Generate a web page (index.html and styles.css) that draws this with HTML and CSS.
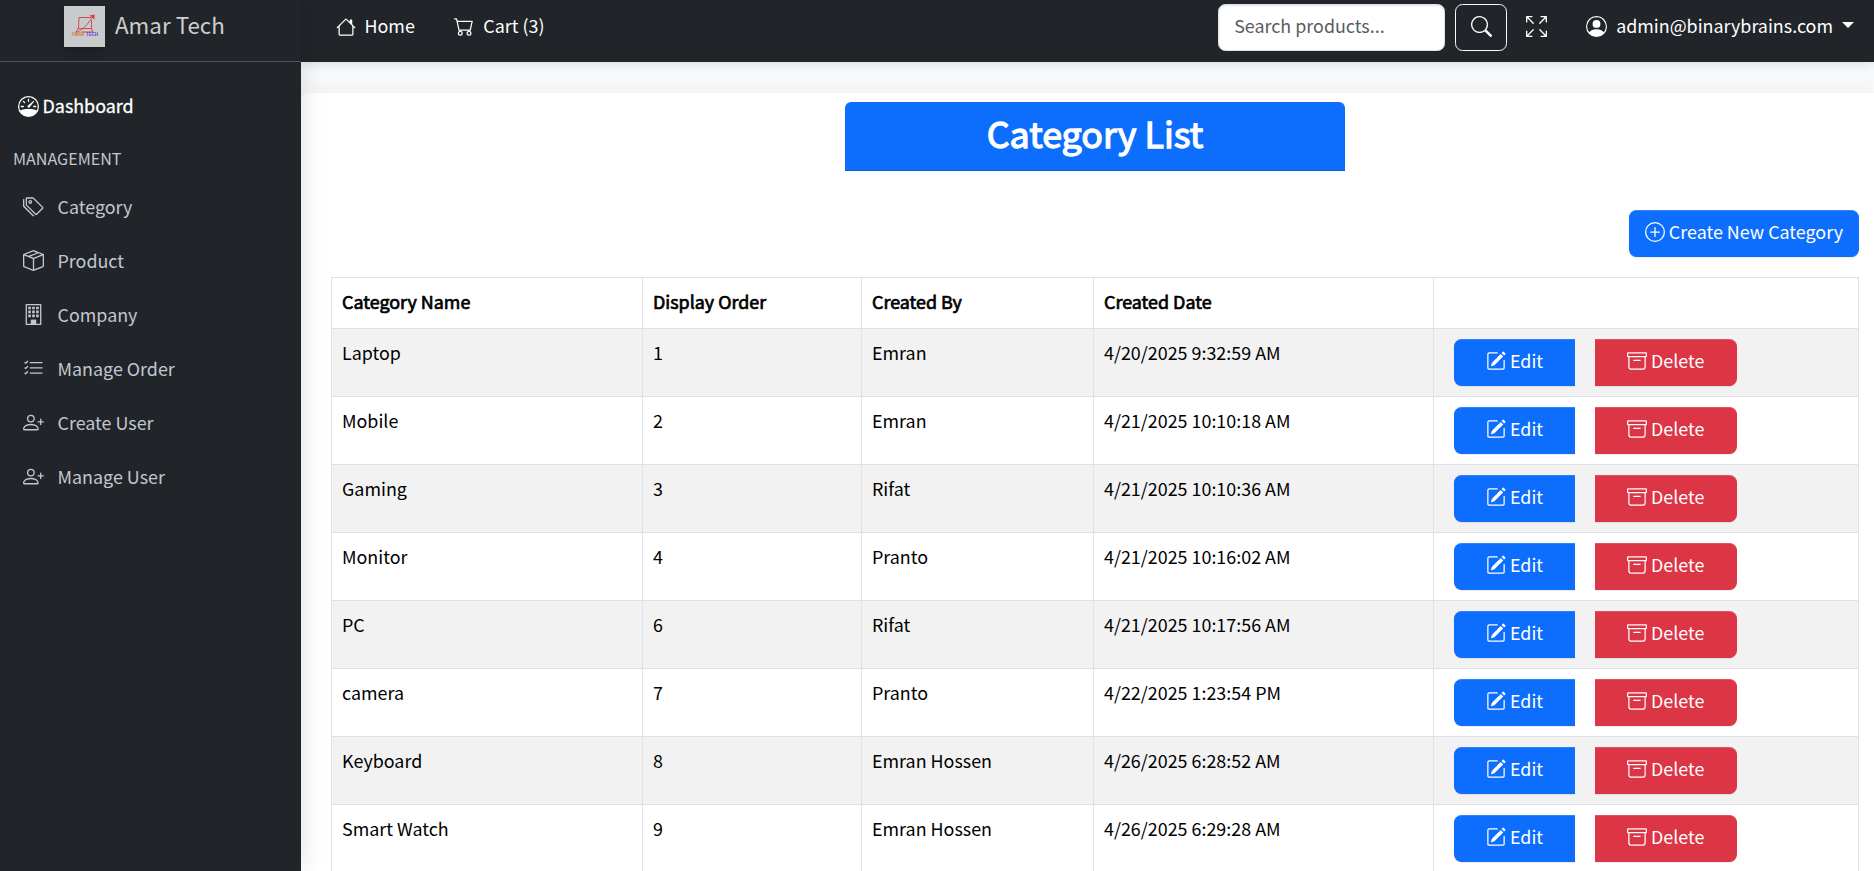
FILE: index.html
```html
<!DOCTYPE html>
<html lang="en">
<head>
<meta charset="utf-8">
<title>Category List - Amar Tech</title>
<link rel="stylesheet" href="styles.css">
</head>
<body>
<svg class="sprite" aria-hidden="true">
  <symbol id="pencil" viewBox="0 0 16 16"><path d="M15.502 1.94a.5.5 0 0 1 0 .706L14.459 3.69l-2-2L13.502.646a.5.5 0 0 1 .707 0l1.293 1.293zm-1.75 2.456-2-2L4.939 9.21a.5.5 0 0 0-.121.196l-.805 2.414a.25.25 0 0 0 .316.316l2.414-.805a.5.5 0 0 0 .196-.12l6.813-6.814z"/><path fill-rule="evenodd" d="M1 13.5A1.5 1.5 0 0 0 2.5 15h11a1.5 1.5 0 0 0 1.5-1.5v-6a.5.5 0 0 0-1 0v6a.5.5 0 0 1-.5.5h-11a.5.5 0 0 1-.5-.5v-11a.5.5 0 0 1 .5-.5H9a.5.5 0 0 0 0-1H2.5A1.5 1.5 0 0 0 1 2.5z"/></symbol>
  <symbol id="archive" viewBox="0 0 16 16"><path d="M0 2a1 1 0 0 1 1-1h14a1 1 0 0 1 1 1v2a1 1 0 0 1-1 1v7.5a2.500 2.500 0 0 1-2.500 2.500h-9A2.500 2.500 0 0 1 1 12.500V5a1 1 0 0 1-1-1zm2 3v7.500A1.500 1.500 0 0 0 3.500 14h9a1.500 1.500 0 0 0 1.500-1.500V5zm13-3H1v2h14zM5 7.500a.5.5 0 0 1 .5-.5h5a.5.5 0 0 1 0 1h-5a.5.5 0 0 1-.5-.5"/></symbol>
  <symbol id="person-plus" viewBox="0 0 16 16"><path d="M6 8a3 3 0 1 0 0-6 3 3 0 0 0 0 6m2-3a2 2 0 1 1-4 0 2 2 0 0 1 4 0m4 8c0 1-1 1-1 1H1s-1 0-1-1 1-4 6-4 6 3 6 4m-1-.004c-.001-.246-.154-.986-.832-1.664C9.516 10.680 8.289 10 6 10s-3.516.68-4.168 1.332c-.678.678-.83 1.418-.832 1.664z"/><path fill-rule="evenodd" d="M13.500 5a.5.5 0 0 1 .5.5V7h1.500a.5.5 0 0 1 0 1H14v1.500a.5.5 0 0 1-1 0V8h-1.500a.5.5 0 0 1 0-1H13V5.500a.5.5 0 0 1 .5-.5"/></symbol>
</svg>

<div class="app">
  <aside class="sidebar">
    <a class="brand">
      <svg class="brand-logo" viewBox="0 0 41 41">
        <rect width="41" height="41" fill="#c9cacb"/>
        <g fill="none" stroke="#cf4a50" stroke-width="1"><path d="M15 11.500h12M15 11.500 14.500 22M27.500 14V22.500H14L12 26M27.500 22.500l1.500 3.500H17.500M12 26.500C19 24 24 18 28.500 11"/></g>
        <path d="M25.500 9.500 30.500 8.500 30.500 13.500Z" fill="#d34046"/>
        <text class="logo-word" x="7.500" y="29.900" fill="#d77b3b" textLength="13" lengthAdjust="spacingAndGlyphs">AMAR</text>
        <text class="logo-word" x="22" y="29.900" fill="#6046cf" textLength="12" lengthAdjust="spacingAndGlyphs">TECH</text>
      </svg>
      <span class="brand-text">Amar Tech</span>
    </a>
    <nav class="side-nav">
      <a class="dashboard"><svg class="icon icon-lg" viewBox="0 0 16 16"><path fill-rule="evenodd" d="M8 0a8 8 0 1 0 0 16A8 8 0 0 0 8 0M1.680 11A7 7 0 1 1 14.320 11C12.500 10.200 10.500 9.900 8 9.900S3.500 10.200 1.680 11"/><path d="M8 2a.5.5 0 0 0-.5.5V4a.5.5 0 0 0 1 0V2.500A.5.5 0 0 0 8 2M3.732 3.732a.5.5 0 0 0 0 .707l.915.914a.5.5 0 1 0 .708-.707l-.915-.914a.5.5 0 0 0-.708 0M2 8a.5.5 0 0 0 .5.5h1.586a.5.5 0 0 0 0-1H2.500A.5.5 0 0 0 2 8m9.500 0a.5.5 0 0 0 .5.500h1.500a.5.5 0 0 0 0-1H12a.5.5 0 0 0-.5.5m.754-4.246a.39.39 0 0 0-.527-.020L7.547 7.310A.91.91 0 1 0 8.850 8.569l3.434-4.297a.39.39 0 0 0-.029-.518z"/></svg><span>Dashboard</span></a>
      <h2 class="side-heading">MANAGEMENT</h2>
      <a class="side-link"><svg class="icon icon-lg" viewBox="0 0 16 16"><path d="M3 2v4.586l7 7L14.586 9l-7-7zM2 2a1 1 0 0 1 1-1h4.586a1 1 0 0 1 .707.293l7 7a1 1 0 0 1 0 1.414l-4.586 4.586a1 1 0 0 1-1.414 0l-7-7A1 1 0 0 1 2 6.586z"/><path d="M5.500 5a.5.5 0 1 1 0-1 .5.5 0 0 1 0 1m0 1a1.500 1.500 0 1 0 0-3 1.500 1.500 0 0 0 0 3M1 7.086a1 1 0 0 0 .293.707L8.750 15.250l-.043.043a1 1 0 0 1-1.414 0l-7-7A1 1 0 0 1 0 7.586V3a1 1 0 0 1 1-1z"/></svg><span>Category</span></a>
      <a class="side-link"><svg class="icon icon-lg" viewBox="0 0 16 16"><path d="M8.186 1.113a.5.5 0 0 0-.372 0L1.846 3.500l2.404.961L10.404 2zm3.564 1.426L5.596 5 8 5.961 14.154 3.500zm3.250 1.700-6.500 2.600v7.922l6.500-2.600V4.240zM7.500 14.762V6.838L1 4.239v7.923zM7.443.184a1.500 1.500 0 0 1 1.114 0l7.129 2.852A.5.5 0 0 1 16 3.500v8.662a1 1 0 0 1-.629.928l-7.185 2.874a.5.5 0 0 1-.372 0L.63 13.090a1 1 0 0 1-.63-.928V3.500a.5.5 0 0 1 .314-.464z"/></svg><span>Product</span></a>
      <a class="side-link"><svg class="icon icon-lg" viewBox="0 0 16 16"><path fill-rule="evenodd" d="M2.500 0h11a.5.5 0 0 1 .5.5v15a.5.5 0 0 1-.5.5h-11a.5.5 0 0 1-.5-.5V.5a.5.5 0 0 1 .5-.5M3 1v14h3v-2.500a.5.5 0 0 1 .5-.5h3a.5.5 0 0 1 .5.500V15h3V1z"/><path d="M4 2h2v2H4zm3 0h2v2H7zm3 0h2v2h-2zM4 5h2v2H4zm3 0h2v2H7zm3 0h2v2h-2zM4 8h2v2H4zm3 0h2v2H7zm3 0h2v2h-2zM6 12h4v3H6z"/></svg><span>Company</span></a>
      <a class="side-link"><svg class="icon icon-lg" viewBox="0 0 16 16"><path fill-rule="evenodd" d="M5 11.500a.5.5 0 0 1 .5-.5h9a.5.5 0 0 1 0 1h-9a.5.5 0 0 1-.5-.5m0-4a.5.5 0 0 1 .5-.5h9a.5.5 0 0 1 0 1h-9a.5.5 0 0 1-.5-.5m0-4a.5.5 0 0 1 .5-.5h9a.5.5 0 0 1 0 1h-9a.5.5 0 0 1-.5-.5M3.854 2.146a.5.5 0 0 1 0 .708l-1.500 1.500a.5.5 0 0 1-.708 0l-.5-.5a.5.5 0 1 1 .708-.708L2 3.293l1.146-1.147a.5.5 0 0 1 .708 0m0 4a.5.5 0 0 1 0 .708l-1.500 1.500a.5.5 0 0 1-.708 0l-.5-.5a.5.5 0 1 1 .708-.708L2 7.293l1.146-1.147a.5.5 0 0 1 .708 0m0 4a.5.5 0 0 1 0 .708l-1.500 1.500a.5.5 0 0 1-.708 0l-.5-.5a.5.5 0 0 1 .708-.708l.146.147 1.146-1.147a.5.5 0 0 1 .708 0"/></svg><span>Manage Order</span></a>
      <a class="side-link"><svg class="icon icon-lg"><use href="#person-plus"/></svg><span>Create User</span></a>
      <a class="side-link"><svg class="icon icon-lg"><use href="#person-plus"/></svg><span>Manage User</span></a>
    </nav>
  </aside>

  <div class="page">
    <header class="topbar">
      <a class="top-link"><svg class="icon" viewBox="0 0 16 16"><path d="M8.707 1.500a1 1 0 0 0-1.414 0L.646 8.146a.5.5 0 0 0 .708.708L2 8.207V13.500A1.500 1.500 0 0 0 3.500 15h9a1.500 1.500 0 0 0 1.500-1.500V8.207l.646.647a.5.5 0 0 0 .708-.708L13 5.793V2.500a.5.5 0 0 0-.5-.5h-1a.5.5 0 0 0-.5.5v1.293zM13 7.207V13.500a.5.5 0 0 1-.5.5h-9a.5.5 0 0 1-.5-.5V7.207l5-5z"/></svg><span>Home</span></a>
      <a class="top-link"><svg class="icon" viewBox="0 0 16 16"><path d="M0 1.500A.5.5 0 0 1 .5 1H2a.5.5 0 0 1 .485.379L2.890 3H14.500a.5.5 0 0 1 .49.598l-1.500 7A.5.5 0 0 1 13 11H4a.5.5 0 0 1-.491-.408L2.010 3.607 1.610 2H.5a.5.5 0 0 1-.5-.5M3.102 4l1.313 6h8.180l1.313-6zM5 11a2 2 0 1 0 0 4 2 2 0 0 0 0-4m7 0a2 2 0 1 0 0 4 2 2 0 0 0 0-4m-7 1a1 1 0 1 1 0 2 1 1 0 0 1 0-2m7 0a1 1 0 1 1 0 2 1 1 0 0 1 0-2"/></svg><span>Cart (3)</span></a>
      <form class="search">
        <input class="search-input" type="text" placeholder="Search products...">
        <button class="search-btn" type="button" aria-label="Search"><svg class="icon icon-lg" viewBox="0 0 16 16"><path d="M11.742 10.344a6.500 6.500 0 1 0-1.397 1.398h-.001q.044.06.098.115l3.850 3.850a1 1 0 0 0 1.415-1.414l-3.850-3.850a1 1 0 0 0-.115-.1zM12 6.500a5.500 5.500 0 1 1-11 0 5.500 5.500 0 0 1 11 0"/></svg></button>
      </form>
      <svg class="icon icon-lg expand" viewBox="0 0 16 16"><path fill-rule="evenodd" d="M5.828 10.172a.5.5 0 0 0-.707 0l-4.096 4.096V11.500a.5.5 0 0 0-1 0v3.975a.5.5 0 0 0 .5.5H4.500a.5.5 0 0 0 0-1H1.732l4.096-4.096a.5.5 0 0 0 0-.707m4.344 0a.5.5 0 0 1 .707 0l4.096 4.096V11.500a.5.5 0 1 1 1 0v3.975a.5.5 0 0 1-.5.5H11.500a.5.5 0 0 1 0-1h2.768l-4.096-4.096a.5.5 0 0 1 0-.707m0-4.344a.5.5 0 0 0 .707 0l4.096-4.096V4.500a.5.5 0 1 0 1 0V.525a.5.5 0 0 0-.5-.5H11.500a.5.5 0 0 0 0 1h2.768l-4.096 4.096a.5.5 0 0 0 0 .707m-4.344 0a.5.5 0 0 1-.707 0L1.025 1.732V4.500a.5.5 0 0 1-1 0V.525a.5.5 0 0 1 .5-.5H4.500a.5.5 0 0 1 0 1H1.732l4.096 4.096a.5.5 0 0 1 0 .707"/></svg>
      <a class="account"><svg class="icon icon-lg" viewBox="0 0 16 16"><path fill-rule="evenodd" d="M8 0a8 8 0 1 0 0 16A8 8 0 0 0 8 0m0 1a7 7 0 0 1 5.468 11.370C12.758 11.226 11.195 10 8 10s-4.757 1.225-5.468 2.370A7 7 0 0 1 8 1"/><circle cx="8" cy="6" r="3"/></svg><span>admin@binarybrains.com</span><i class="caret"></i></a>
    </header>

    <main class="card">
      <h1 class="title"><span>Category List</span></h1>
      <div class="actions"><a class="btn btn-primary"><svg class="icon" viewBox="0 0 16 16"><path d="M8 15A7 7 0 1 1 8 1a7 7 0 0 1 0 14m0 1A8 8 0 1 0 8 0a8 8 0 0 0 0 16"/><path d="M8 4a.5.5 0 0 1 .5.5v3h3a.5.5 0 0 1 0 1h-3v3a.5.5 0 0 1-1 0v-3h-3a.5.5 0 0 1 0-1h3v-3A.5.5 0 0 1 8 4"/></svg><span>Create New Category</span></a></div>
      <table class="grid">
        <colgroup><col class="c-name"><col class="c-order"><col class="c-by"><col class="c-date"><col></colgroup>
        <thead><tr><th>Category Name</th><th>Display Order</th><th>Created By</th><th>Created Date</th><th></th></tr></thead>
        <tbody id="rows"></tbody>
      </table>
    </main>
  </div>
</div>
<script src="app.js"></script>
</body>
</html>
```
FILE: app.js
```js
const categories = [
  ['Laptop', 1, 'Emran', '4/20/2025 9:32:59 AM'],
  ['Mobile', 2, 'Emran', '4/21/2025 10:10:18 AM'],
  ['Gaming', 3, 'Rifat', '4/21/2025 10:10:36 AM'],
  ['Monitor', 4, 'Pranto', '4/21/2025 10:16:02 AM'],
  ['PC', 6, 'Rifat', '4/21/2025 10:17:56 AM'],
  ['camera', 7, 'Pranto', '4/22/2025 1:23:54 PM'],
  ['Keyboard', 8, 'Emran Hossen', '4/26/2025 6:28:52 AM'],
  ['Smart Watch', 9, 'Emran Hossen', '4/26/2025 6:29:28 AM']
];

const actions = `<td><div class="btn-group">
  <a class="btn btn-primary btn-edit"><svg class="icon"><use href="#pencil"/></svg><span>Edit</span></a>
  <a class="btn btn-danger btn-delete"><svg class="icon"><use href="#archive"/></svg><span>Delete</span></a>
</div></td>`;

document.getElementById('rows').innerHTML = categories
  .map(row => `<tr>${row.map(cell => `<td>${cell}</td>`).join('')}${actions}</tr>`)
  .join('');
```
FILE: styles.css
```css
* { box-sizing: border-box; }

body {
  margin: 0;
  height: 871px;
  overflow: hidden;
  background: #f8f9fa;
  color: #000;
  font: 17.9px/30px "Noto Sans CJK SC", "Noto Sans", sans-serif;
}

.sprite { display: none; }

.icon {
  width: 20px;
  height: 20px;
  flex: none;
  fill: currentColor;
}

.icon-lg { width: 21px; height: 21px; }

.app { display: flex; height: 871px; }

/* Sidebar */
.sidebar {
  position: relative;
  z-index: 2;
  flex: none;
  width: 301px;
  background: #212529;
  color: #c2c7d0;
  box-shadow: 0 0 24px rgba(0, 0, 0, .13);
}

.brand {
  display: flex;
  align-items: flex-start;
  height: 62px;
  padding: 6px 0 0 64px;
  border-bottom: 1px solid #4b545c;
}

.brand-logo {
  width: 41px;
  height: 41px;
  box-shadow: 0 3px 8px rgba(0, 0, 0, .25);
}

.logo-word { font: bold 4.5px "Liberation Sans", sans-serif; }

.brand-text {
  margin: 3px 0 0 10px;
  color: #cccdce;
  font-size: 22.4px;
}

.side-nav { padding-top: 29px; }

.dashboard {
  display: flex;
  align-items: center;
  gap: 4px;
  height: 30px;
  padding-left: 17.5px;
  color: #fff;
}

.dashboard span { -webkit-text-stroke: .3px; }

.dashboard span,
.side-link span { padding-bottom: 2px; }

.side-heading {
  margin: 22px 0 5px;
  padding-left: 13px;
  font-size: 16.1px;
  font-weight: 400;
}

.side-link {
  display: flex;
  align-items: center;
  gap: 14px;
  height: 54px;
  padding: 3px 0 0 22.5px;
}

/* Top bar */
.page {
  display: flex;
  flex-direction: column;
  flex: 1;
  min-width: 0;
}

.topbar {
  position: relative;
  z-index: 1;
  display: flex;
  flex: none;
  align-items: center;
  height: 62px;
  padding: 0 20px 8px 34.5px;
  background: #212529;
  color: #fff;
  box-shadow: 0 2px 10px rgba(0, 0, 0, .12);
}

.top-link {
  display: flex;
  align-items: center;
  gap: 9px;
  margin-right: 39.5px;
}

.top-link span,
.account span { padding-bottom: 4px; }

.top-link .icon { margin-bottom: 1px; }

.search {
  display: flex;
  gap: 10px;
  margin: 0 19px 0 auto;
}

.search-input {
  width: 227px;
  height: 47px;
  padding: 0 16px 4px 15px;
  border: 1px solid #dee2e6;
  border-radius: 7.5px;
  background: #fff;
  box-shadow: inset 0 1px 2px rgba(0, 0, 0, .1);
  font: inherit;
}

.search-input::placeholder { color: #595c5f; opacity: 1; }

.search-btn {
  display: flex;
  align-items: center;
  justify-content: center;
  width: 52px;
  height: 47px;
  padding: 0 0 2px;
  border: 1px solid #f8f9fa;
  border-radius: 7.5px;
  background: none;
  color: #f8f9fa;
}

.expand { margin: 0 39px 2px 0; }

.account {
  display: flex;
  align-items: center;
  gap: 9px;
}

.account .icon { margin-bottom: 2px; }

.caret {
  margin-bottom: 4px;
  border: 6px solid transparent;
  border-top-color: #fff;
  border-bottom: 0;
}

/* Content */
.card {
  flex: 1;
  min-height: 0;
  margin-top: 31px;
  padding: 9px 15px 0 30px;
  border-radius: 7.5px 0 0 0;
  background: #fff;
  box-shadow: 0 0 20px rgba(0, 0, 0, .05);
}

.title {
  width: 500px;
  height: 69px;
  margin: 0 auto 39px;
  border-bottom: 1px solid #0b5ed7;
  border-radius: 6px 6px 0 0;
  background: #0d6efd;
  color: #fff;
  font-size: 35.8px;
  font-weight: 400;
  line-height: 60px;
  text-align: center;
  -webkit-text-stroke: 1.3px;
}

.actions {
  display: flex;
  justify-content: flex-end;
  margin-bottom: 20px;
}

.btn {
  display: flex;
  align-items: center;
  gap: 4px;
  height: 47px;
  padding: 0 16px 3px;
  border-radius: 7.5px;
  color: #fff;
  box-shadow: inset 0 2px 0 -1px rgba(255, 255, 255, .15), 0 1px 1px rgba(0, 0, 0, .075);
}

.btn span { padding-bottom: 2px; }

.btn-primary { background: #0d6efd; }
.btn-danger { background: #dc3545; }

.btn-group {
  display: flex;
  gap: 20px;
  margin-left: 10px;
}

.btn-edit { width: 121px; padding-left: 32px; border-radius: 7.5px 0 0 7.5px; }
.btn-delete { width: 142px; padding-left: 32px; border-radius: 0 7.5px 7.5px 0; }

.grid {
  width: 1528px;
  border-collapse: collapse;
  table-layout: fixed;
}

.c-name { width: 311px; }
.c-order { width: 219px; }
.c-by { width: 232px; }
.c-date { width: 340px; }

.grid th,
.grid td {
  padding: 8px 10px 12px;
  border: 1px solid #dee2e6;
  text-align: left;
  vertical-align: top;
}

.grid th {
  font-weight: 400;
  -webkit-text-stroke: .7px;
}

.grid td:last-child { padding: 10px; }

.grid tbody tr:nth-child(odd) { background: #f2f2f2; }
```
